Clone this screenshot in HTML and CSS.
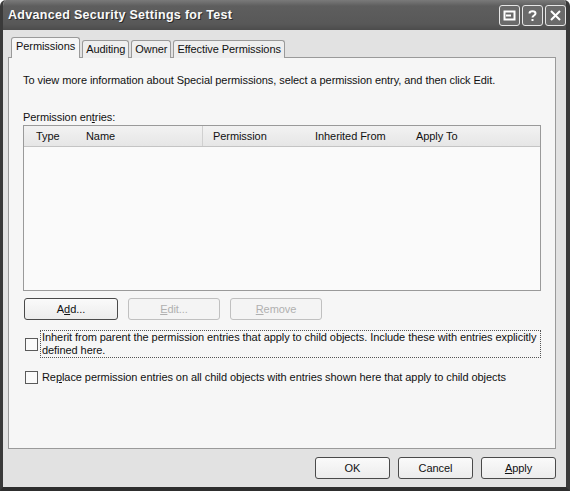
FILE: index.html
```html
<!DOCTYPE html>
<html lang="en">
<head>
  <meta charset="UTF-8">
  <title>Advanced Security Settings for Test</title>
  <link rel="stylesheet" href="styles.css">
</head>
<body>
  <div class="window">
    <div class="titlebar">
      <span class="title">Advanced Security Settings for Test</span>
      <div class="caption-btns">
        <span class="cap-btn">
          <svg width="13" height="13" viewBox="0 0 13 13"><rect x="1.5" y="2.5" width="10" height="8" fill="none" stroke="#fff" stroke-width="2"/><line x1="3" y1="6.5" x2="8" y2="6.5" stroke="#fff" stroke-width="2"/></svg>
        </span>
        <span class="cap-btn">
          <svg width="13" height="13" viewBox="0 0 13 13"><path d="M3.5 4.5 C3.5 1.5 9.5 1.5 9.5 4.5 C9.5 6.5 6.5 6.5 6.5 8.5" fill="none" stroke="#fff" stroke-width="2"/><rect x="5.5" y="10" width="2" height="2" fill="#fff"/></svg>
        </span>
        <span class="cap-btn">
          <svg width="13" height="13" viewBox="0 0 13 13"><path d="M2 2 L11 11 M11 2 L2 11" stroke="#fff" stroke-width="2"/></svg>
        </span>
      </div>
    </div>

    <div class="content">
      <div class="tabs">
        <span class="tab active">Permissions</span>
        <span class="tab">Auditing</span>
        <span class="tab">Owner</span>
        <span class="tab">Effective Permissions</span>
      </div>

      <div class="panel">
        <p class="intro">To view more information about Special permissions, select a permission entry, and then click Edit.</p>

        <div class="list-label">Permission en<u>t</u>ries:</div>
        <div class="listview">
          <div class="list-head">
            <span class="col col-type">Type</span>
            <span class="col col-name">Name</span>
            <span class="col col-perm">Permission</span>
            <span class="col col-inh">Inherited From</span>
            <span class="col col-apply">Apply To</span>
          </div>
        </div>

        <div class="list-actions">
          <button class="btn">A<u>d</u>d...</button>
          <button class="btn" disabled><u>E</u>dit...</button>
          <button class="btn" disabled><u>R</u>emove</button>
        </div>

        <label class="check">
          <span class="box"></span>
          <span class="check-text focused">Inherit from parent the permission entries that apply to child objects. Include these with entries explicitly defined here.</span>
        </label>

        <label class="check">
          <span class="box"></span>
          <span class="check-text">Re<u>p</u>lace permission entries on all child objects with entries shown here that apply to child objects</span>
        </label>
      </div>

      <div class="footer">
        <button class="btn btn-dlg">OK</button>
        <button class="btn btn-dlg">Cancel</button>
        <button class="btn btn-dlg"><u>A</u>pply</button>
      </div>
    </div>
  </div>
</body>
</html>
```

FILE: styles.css
```css
body {
  margin: 0;
  font-family: 'Liberation Sans', Arial, sans-serif;
  font-size: 11px;
  letter-spacing: -0.07px;
  color: #111;
  background: #fff;
}

.window {
  width: 570px;
  height: 491px;
  box-sizing: border-box;
  background: #e2e2e2;
  border-left: 3px solid #3a3a3a;
  border-right: 4px solid #3a3a3a;
  border-bottom: 4px solid #2e2e2e;
  border-radius: 6px 6px 0 0;
  display: flex;
  flex-direction: column;
  overflow: hidden;
}

.titlebar {
  height: 30px;
  flex: none;
  margin: 0 -4px 0 -3px;
  padding: 0 4px 0 8px;
  background: linear-gradient(#7a7a7a, #5e5e5e 20%, #585858 80%, #4c4c4c);
  display: flex;
  align-items: center;
  justify-content: space-between;
  border-radius: 6px 6px 0 0;
}

.title {
  color: #fafafa;
  font-weight: bold;
  font-size: 12.5px;
  letter-spacing: 0.3px;
  text-shadow: 1px 1px 0 #2a2a2a;
}

.caption-btns {
  display: flex;
  gap: 2px;
}

.cap-btn {
  width: 21px;
  height: 21px;
  box-sizing: border-box;
  border: 1px solid #e6e6e6;
  border-radius: 3px;
  background: #6a6a6a;
  display: flex;
  align-items: center;
  justify-content: center;
}

.content {
  flex: 1;
  padding: 8px 10px 0 5px;
  display: flex;
  flex-direction: column;
}

.tabs {
  display: flex;
  height: 20px;
  align-items: flex-end;
  padding-left: 4px;
  margin-bottom: -1px;
  position: relative;
  z-index: 1;
}

.tab {
  height: 18px;
  line-height: 17px;
  box-sizing: border-box;
  padding: 0 3px;
  margin-right: 2px;
  border: 1px solid #9a9a9a;
  border-bottom: none;
  border-radius: 3px 3px 0 0;
  background: #eeeeee;
}

.tab.active {
  height: 21px;
  padding: 0 4px;
  background: #f6f6f6;
  margin-left: -1px;
}

.panel {
  height: 392px;
  box-sizing: border-box;
  border: 1px solid #9a9a9a;
  background: #f6f6f6;
  padding: 0 14px 0 14px;
}

.intro {
  margin: 16px 0 0;
}

.list-label {
  margin-top: 25px;
}

.listview {
  margin-top: 2px;
  height: 166px;
  width: 518px;
  box-sizing: border-box;
  border: 1px solid #9a9a9a;
  background: #fafafa;
}

.list-head {
  display: grid;
  grid-template-columns: 56px 123px 106px 101px 1fr;
  height: 20px;
  line-height: 20px;
  background: linear-gradient(#f2f2f2, #e6e6e6);
  border-bottom: 1px solid #c4c4c4;
}

.col {
  padding-left: 6px;
}

.col-type {
  padding-left: 12px;
}

.col-name {
  border-right: 1px solid #d0d0d0;
}

.col-perm {
  padding-left: 10px;
}

.list-actions {
  display: flex;
  gap: 10px;
  margin-top: 7px;
  padding-left: 1px;
}

.btn {
  width: 94px;
  height: 22px;
  font: inherit;
  letter-spacing: inherit;
  color: #111;
  background: linear-gradient(#fafafa, #ececec);
  border: 1px solid #4a4a4a;
  border-radius: 3px;
  padding: 0;
}

.btn:disabled {
  width: 92px;
  color: #b0b0b0;
  border-color: #c0c0c0;
  background: #f4f4f4;
}

.check {
  display: flex;
  align-items: center;
  gap: 2px;
  margin-top: 10px;
  padding-left: 2px;
}

.box {
  flex: none;
  width: 11px;
  height: 11px;
  border: 1px solid #5a5a5a;
  background: #fafafa;
}

.check-text {
  line-height: 13px;
  padding: 0 1px;
  border: 1px dotted transparent;
}

.check-text.focused {
  border-color: #555;
}

.check + .check {
  margin-top: 12px;
}

.footer {
  display: flex;
  justify-content: flex-end;
  gap: 8px;
  margin-top: 8px;
}

.btn-dlg {
  width: 75px;
  height: 22px;
}
```
